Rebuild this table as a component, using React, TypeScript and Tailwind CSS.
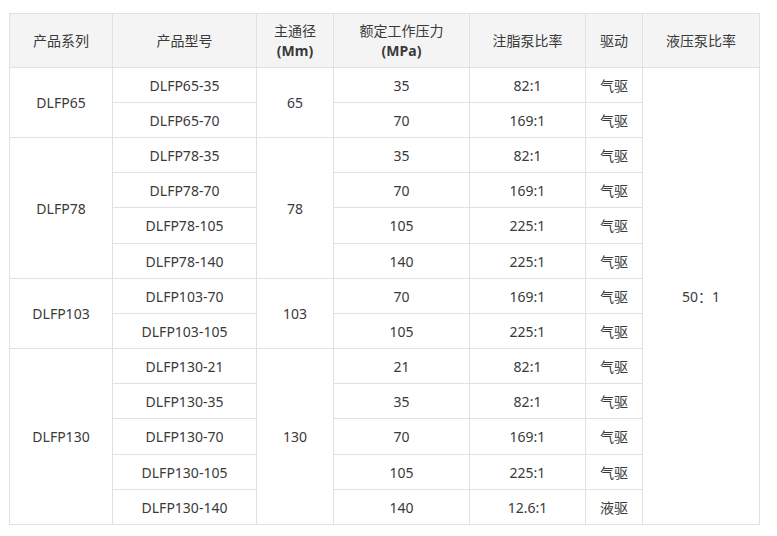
import React from "react";

type Row = { model: string; pressure: string; ratio: string; drive: string };

const groups: { series: string; bore: string; rows: Row[] }[] = [
  {
    series: "DLFP65",
    bore: "65",
    rows: [
      { model: "DLFP65-35", pressure: "35", ratio: "82:1", drive: "气驱" },
      { model: "DLFP65-70", pressure: "70", ratio: "169:1", drive: "气驱" },
    ],
  },
  {
    series: "DLFP78",
    bore: "78",
    rows: [
      { model: "DLFP78-35", pressure: "35", ratio: "82:1", drive: "气驱" },
      { model: "DLFP78-70", pressure: "70", ratio: "169:1", drive: "气驱" },
      { model: "DLFP78-105", pressure: "105", ratio: "225:1", drive: "气驱" },
      { model: "DLFP78-140", pressure: "140", ratio: "225:1", drive: "气驱" },
    ],
  },
  {
    series: "DLFP103",
    bore: "103",
    rows: [
      { model: "DLFP103-70", pressure: "70", ratio: "169:1", drive: "气驱" },
      { model: "DLFP103-105", pressure: "105", ratio: "225:1", drive: "气驱" },
    ],
  },
  {
    series: "DLFP130",
    bore: "130",
    rows: [
      { model: "DLFP130-21", pressure: "21", ratio: "82:1", drive: "气驱" },
      { model: "DLFP130-35", pressure: "35", ratio: "82:1", drive: "气驱" },
      { model: "DLFP130-70", pressure: "70", ratio: "169:1", drive: "气驱" },
      { model: "DLFP130-105", pressure: "105", ratio: "225:1", drive: "气驱" },
      { model: "DLFP130-140", pressure: "140", ratio: "12.6:1", drive: "液驱" },
    ],
  },
];

const totalRows = groups.reduce((n, g) => n + g.rows.length, 0);

const cell = "border border-[#e1e1e1] text-center align-middle px-1";

export default function App() {
  let idx = 0;
  return (
    <div
      className="bg-white pl-[9px] pt-[13px] text-[14px] text-[#3a3a3a]"
      style={{ fontFamily: '"Noto Sans", "Noto Sans CJK SC", sans-serif' }}
    >
      <table className="border-collapse table-fixed w-[750px]">
        <colgroup>
          <col className="w-[103px]" />
          <col className="w-[144px]" />
          <col className="w-[77px]" />
          <col className="w-[136px]" />
          <col className="w-[116px]" />
          <col className="w-[57px]" />
          <col className="w-[117px]" />
        </colgroup>
        <thead>
          <tr className="bg-[#f4f4f4] h-[54px]">
            <th className={`${cell} font-normal`}>产品系列</th>
            <th className={`${cell} font-normal`}>产品型号</th>
            <th className={`${cell} font-normal leading-[20px]`}>
              主通径
              <br />
              <span className="font-bold">(Mm)</span>
            </th>
            <th className={`${cell} font-normal leading-[20px]`}>
              额定工作压力
              <br />
              <span className="font-bold">(MPa)</span>
            </th>
            <th className={`${cell} font-normal`}>注脂泵比率</th>
            <th className={`${cell} font-normal`}>驱动</th>
            <th className={`${cell} font-normal`}>液压泵比率</th>
          </tr>
        </thead>
        <tbody>
          {groups.map((g) =>
            g.rows.map((r, i) => {
              const n = idx++;
              return (
                <tr
                  key={r.model}
                  className={n === 4 || n === 10 ? "h-[36px]" : "h-[35px]"}
                >
                  {i === 0 && (
                    <td className={cell} rowSpan={g.rows.length}>
                      {g.series}
                    </td>
                  )}
                  <td className={cell}>{r.model}</td>
                  {i === 0 && (
                    <td className={cell} rowSpan={g.rows.length}>
                      {g.bore}
                    </td>
                  )}
                  <td className={cell}>{r.pressure}</td>
                  <td className={cell}>{r.ratio}</td>
                  <td className={cell}>{r.drive}</td>
                  {n === 0 && (
                    <td className={cell} rowSpan={totalRows}>
                      50：1
                    </td>
                  )}
                </tr>
              );
            })
          )}
        </tbody>
      </table>
    </div>
  );
}
